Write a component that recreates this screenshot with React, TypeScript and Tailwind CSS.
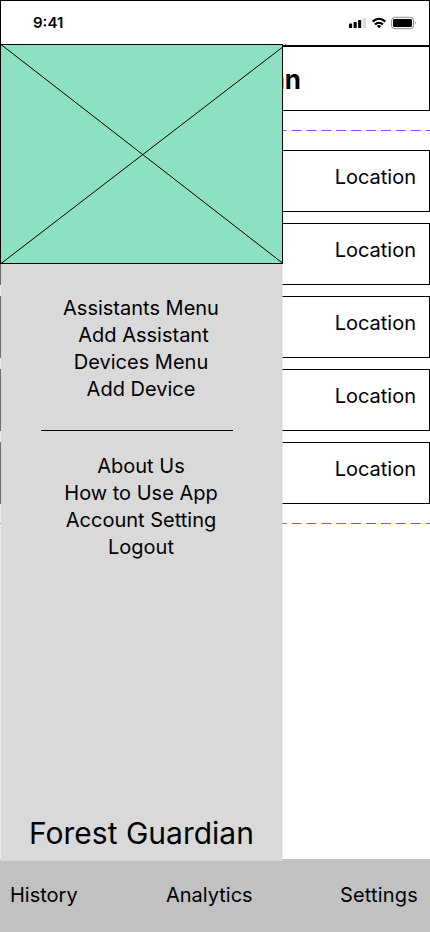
const devices = ["Location", "Location", "Location", "Location", "Location"];
const deviceLinks = ["Assistants Menu", "Add Assistant", "Devices Menu", "Add Device"];
const accountLinks = ["About Us", "How to Use App", "Account Setting", "Logout"];

function StatusIcons() {
  return (
    <svg width="68" height="14" viewBox="0 0 68 14" className="block">
      <rect x="1" y="7.5" width="3.1" height="4.5" rx="0.6" />
      <rect x="5.6" y="6" width="3.1" height="6" rx="0.6" />
      <rect x="10.1" y="4" width="3.1" height="8" rx="0.6" />
      <rect x="14.8" y="2" width="3.1" height="10" rx="0.6" opacity="0.15" />
      <g fill="none" stroke="#000" strokeWidth="2.2">
        <path d="M24.7 5.6C28.6 1.8 33.4 1.8 37.3 5.6" />
        <path d="M27 8.5c2.3-2.2 5.7-2.2 8 0" />
      </g>
      <path d="M28.7 9.9c1.3-1.1 3.3-1.1 4.6 0L31 12.2z" />
      <rect x="43.6" y="1.3" width="21.9" height="11.4" rx="3" fill="none" stroke="#000" strokeOpacity="0.45" />
      <rect x="45" y="3" width="19" height="8" rx="1.2" />
      <path d="M66.8 5.2v3.6c1.1-.6 1.1-3 0-3.6z" opacity="0.5" />
    </svg>
  );
}

function DashedLine({ className }: { className: string }) {
  return (
    <svg width="430" height="1" className={"block " + className}>
      <line x1="0" y1="0.5" x2="430" y2="0.5" stroke="#9747ff" strokeDasharray="9.93 4.96" strokeDashoffset="6.2" />
    </svg>
  );
}

function Drawer() {
  return (
    <aside className="absolute left-0 top-[44px] flex h-[817px] w-[283px] flex-col">
      <div className="h-[220px] border border-black bg-[#8be1c2]">
        <svg width="286" height="220" viewBox="1 1 286 220" className="block overflow-visible">
          <path d="M1 .5L283 219.5M1 219.5L286 .5" stroke="#000" fill="none" />
        </svg>
      </div>
      <div className="flex flex-1 flex-col items-center border-x border-[#d9d9d9]/50 bg-[#d9d9d9] bg-clip-padding pt-[31px]">
        <ul className="mr-px text-center text-[20px] leading-[27px]">
          {deviceLinks.map((t) => (
            <li key={t} className={t === "Add Assistant" ? "pl-[5px]" : ""}>{t}</li>
          ))}
        </ul>
        <div className="mr-[9px] mt-[27px] h-px w-[192px] shrink-0 bg-black" />
        <ul className="mr-px mt-[22px] text-center text-[20px] leading-[27px]">
          {accountLinks.map((t) => (
            <li key={t}>{t}</li>
          ))}
        </ul>
        <div className="mb-[9px] mt-auto whitespace-nowrap text-[30px] leading-[37px]">Forest Guardian</div>
      </div>
    </aside>
  );
}

export default function App() {
  return (
    <div className="relative flex h-[932px] w-[430px] flex-col overflow-hidden bg-white font-['Inter',sans-serif] text-black">
      <header className="flex h-[46px] shrink-0 items-center justify-between border border-black pl-[32px] pr-[13px]">
        <span className="text-[15px] font-semibold leading-5">9:41</span>
        <StatusIcons />
      </header>
      <div className="flex h-[65px] shrink-0 items-center justify-end border border-black pr-[128px] pt-[2px]">
        <h1 className="text-[26px] font-bold leading-8">Forest Guardian</h1>
      </div>
      <DashedLine className="mt-[19px] shrink-0" />
      <main className="mt-[19px] flex flex-col gap-[11px]">
        {devices.map((d, i) => (
          <div key={i} className="flex h-[62px] justify-end border border-black pr-[13px] pt-[14px] text-[20px] leading-6">
            {d}
          </div>
        ))}
      </main>
      <DashedLine className="mt-[19px] shrink-0" />
      <nav className="mt-auto flex h-[73px] shrink-0 items-center justify-between bg-[#c1c1c1] pb-[2px] pl-[10px] pr-[12px] text-[20px] leading-6">
        <span>History</span>
        <span className="pl-[1px]">Analytics</span>
        <span className="tracking-[0.18px]">Settings</span>
      </nav>
      <Drawer />
    </div>
  );
}
